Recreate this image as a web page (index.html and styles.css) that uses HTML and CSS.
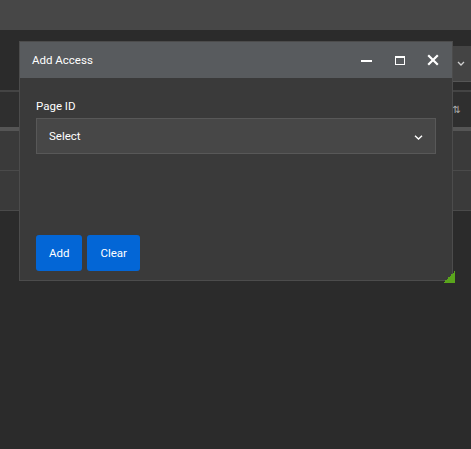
FILE: index.html
```html
<!DOCTYPE html>
<html lang="en">
<head>
<meta charset="utf-8">
<title>Add Access</title>
<link rel="stylesheet" href="styles.css">
</head>
<body>
<div class="page">
  <div class="topbar"></div>
  <div class="toolbar">
    <div class="page-select">
      <svg class="chev" width="8" height="5" viewBox="0 0 8 5"><path d="M1 1 L4 4 L7 1" fill="none" stroke="#d0d0d0" stroke-width="1.3"/></svg>
    </div>
  </div>
  <div class="table">
    <div class="thead">
      <span class="sort">⇅</span>
    </div>
    <div class="thead-sep"></div>
    <div class="row"></div>
    <div class="row"></div>
  </div>

  <div class="dialog">
    <div class="dialog-header">
      <span class="dialog-title">Add Access</span>
      <div class="dialog-actions">
        <span class="ic ic-min"></span>
        <span class="ic ic-max"></span>
        <svg class="ic-close" width="12" height="12" viewBox="0 0 12 12"><path d="M1.2 1.2 L10.8 10.8 M10.8 1.2 L1.2 10.8" stroke="#ffffff" stroke-width="2.2" fill="none"/></svg>
      </div>
    </div>
    <div class="dialog-body">
      <label class="field-label">Page ID</label>
      <div class="select">
        <span>Select</span>
        <svg width="9" height="5" viewBox="0 0 9 5"><path d="M1 0.8 L4.5 4 L8 0.8" fill="none" stroke="#ffffff" stroke-width="1.4"/></svg>
      </div>
      <div class="buttons">
        <button class="btn">Add</button>
        <button class="btn">Clear</button>
      </div>
    </div>
    <span class="resize"></span>
  </div>
</div>
</body>
</html>
```

FILE: styles.css
```css
html, body {
  margin: 0;
  padding: 0;
}
body {
  background: #2b2b2b;
  font-family: Roboto, "Liberation Sans", Arial, sans-serif;
  font-size: 11.5px;
  color: #ffffff;
  width: 471px;
  height: 449px;
  overflow: hidden;
}
.page {
  position: relative;
  height: 449px;
}
.topbar {
  height: 30px;
  background: #474747;
}
.toolbar {
  height: 62px;
  border-bottom: 2px solid #444444;
  box-sizing: border-box;
  display: flex;
  justify-content: flex-end;
  padding-top: 16px;
}
.page-select {
  width: 200px;
  height: 36px;
  background: #444444;
  border-bottom: 1px solid #555555;
  box-sizing: border-box;
  display: flex;
  align-items: center;
  justify-content: flex-end;
  padding-right: 6px;
}
.chev {
  display: block;
}
.table {
  display: flex;
  flex-direction: column;
}
.thead {
  height: 35px;
  background: #2f2f2f;
  display: flex;
  align-items: center;
  justify-content: flex-end;
  padding-right: 10px;
}
.sort {
  color: #b0b0b0;
  font-size: 10px;
  font-family: "DejaVu Sans", sans-serif;
}
.thead-sep {
  height: 4px;
  background: #555555;
}
.row {
  height: 40px;
  background: #3a3a3a;
  border-bottom: 1px solid #4a4a4a;
  box-sizing: border-box;
}
.dialog {
  position: absolute;
  left: 19px;
  top: 41px;
  width: 434px;
  height: 240px;
  box-sizing: border-box;
  border: 1px solid #4c4c4c;
  background: #3a3a3a;
  display: flex;
  flex-direction: column;
}
.dialog-header {
  height: 36px;
  background: #585b5e;
  display: flex;
  align-items: center;
  justify-content: space-between;
  padding-left: 12px;
  padding-right: 13px;
}
.dialog-title {
  font-size: 11.5px;
  color: #ffffff;
}
.dialog-actions {
  display: flex;
  align-items: center;
}
.ic-min {
  display: block;
  width: 11px;
  height: 2px;
  background: #ffffff;
  margin-right: 23px;
  margin-top: 1px;
}
.ic-max {
  display: block;
  width: 10px;
  height: 9px;
  box-sizing: border-box;
  border: 1.2px solid #ffffff;
  border-top-width: 2px;
  margin-right: 22px;
}
.ic-close {
  display: block;
}
.dialog-body {
  flex: 1;
  padding: 21px 16px 9px 16px;
  display: flex;
  flex-direction: column;
}
.field-label {
  display: block;
  font-size: 11.5px;
  line-height: 14px;
  color: #ffffff;
  margin-bottom: 5px;
}
.select {
  height: 36px;
  box-sizing: border-box;
  border: 1px solid #585858;
  background: #474747;
  display: flex;
  align-items: center;
  justify-content: space-between;
  padding: 0 12px 0 12px;
  font-size: 11.5px;
}
.select svg {
  display: block;
  margin-top: 2px;
}
.buttons {
  margin-top: auto;
  display: flex;
  gap: 5px;
}
.btn {
  height: 36px;
  padding: 0 13px;
  border: none;
  border-radius: 3px;
  background: #0366d6;
  color: #ffffff;
  font-family: Roboto, "Liberation Sans", Arial, sans-serif;
  font-size: 11.5px;
}
.resize {
  position: absolute;
  right: -3px;
  bottom: -3px;
  width: 12px;
  height: 12px;
  background: linear-gradient(to bottom right, transparent 50%, #5aa51c 50%);
}
```
